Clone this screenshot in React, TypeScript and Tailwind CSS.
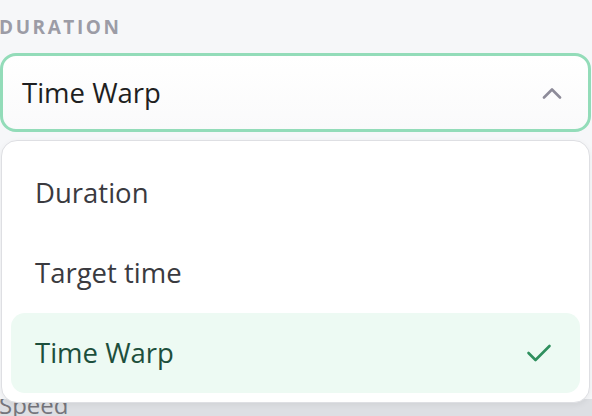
import React from 'react';

const options = ['Duration', 'Target time', 'Time Warp'];

export default function App() {
  const selected = 'Time Warp';

  return (
    <div
      className="w-[592px] h-[416px] overflow-hidden bg-[#f6f7f9] flex flex-col"
      style={{ fontFamily: '"Open Sans", Lato, sans-serif' }}
    >
      <div className="pt-[16px] h-[53px]">
        <div className="text-[19px] leading-[22px] font-bold tracking-[0.135em] text-[#9c9ca6] -ml-[1px]">
          DURATION
        </div>
      </div>

      <div className="w-[591px] h-[79px] border-[3px] border-[#93dcb9] rounded-[16px] bg-gradient-to-b from-white to-[#fafafb] flex items-center justify-between pl-[19px] pr-[26px]">
        <span className="text-[27.5px] leading-[34px] text-[#1f1f22]">{selected}</span>
        <svg width="20" height="12" viewBox="0 0 20 12" fill="none">
          <path d="M2 10.5 L10 2.5 L18 10.5" stroke="#8d8b99" strokeWidth="2.6" strokeLinecap="round" strokeLinejoin="round" />
        </svg>
      </div>

      <div className="mt-[8px] ml-[1px] w-[589px] h-[263px] bg-white rounded-[16px] border border-[#dedfe3] shadow-[0_2px_6px_rgba(0,0,0,0.06)] pt-[12px] px-[9px] relative z-10 flex flex-col">
        {options.map((opt) => {
          const active = opt === selected;
          return (
            <div
              key={opt}
              className={`h-[80px] rounded-[14px] flex items-center justify-between pl-[24px] pr-[28px] ${
                active ? 'bg-[#edfaf3]' : ''
              }`}
            >
              <span className={`text-[27.5px] leading-[34px] ${active ? 'text-[#1d4f3c]' : 'text-[#3a3a3f]'}`}>{opt}</span>
              {active && (
                <svg width="26" height="20" viewBox="0 0 26 20" fill="none">
                  <path d="M2.5 10 L9.5 17 L23.5 3" stroke="#2f8f5e" strokeWidth="2.6" strokeLinecap="round" strokeLinejoin="round" />
                </svg>
              )}
            </div>
          );
        })}
      </div>

      <div className="flex-1 bg-[#dddfe3] -mt-[4px] overflow-hidden">
        <div className="text-[24px] leading-[24px] text-[#75757c] -mt-[6px] -ml-[1px]">Speed</div>
      </div>
    </div>
  );
}
